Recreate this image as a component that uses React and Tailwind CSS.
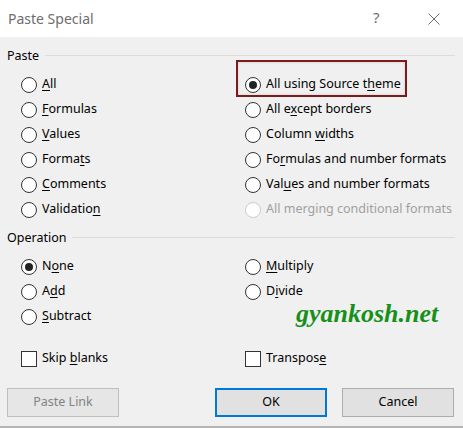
import React from "react";

const U = ({ children }) => <span className="underline underline-offset-2 decoration-1">{children}</span>;

function Radio({ checked, disabled, children }) {
  return (
    <div className="flex items-center h-[25px]">
      <span
        className={`w-[16px] h-[16px] rounded-full border flex items-center justify-center bg-white ${
          disabled ? "border-[#cccccc]" : "border-[#333333]"
        }`}
      >
        {checked && <span className="w-[8px] h-[8px] rounded-full bg-[#222]" />}
      </span>
      <span className={`ml-[5px] ${disabled ? "text-[#a0a0a0]" : "text-black"}`}>{children}</span>
    </div>
  );
}

function Check({ children }) {
  return (
    <div className="flex items-center h-[25px]">
      <span className="w-[16px] h-[16px] border border-[#333333] bg-white" />
      <span className="ml-[5px] text-black">{children}</span>
    </div>
  );
}

function GroupHeader({ label }) {
  return (
    <div className="flex items-center h-[16px] pl-[7px] pr-[8px]">
      <span className="text-black">{label}</span>
      <span className="flex-1 h-px bg-[#dcdcdc] ml-[6px] mt-[-1px]" />
    </div>
  );
}

function Btn({ children, primary, disabled }) {
  return (
    <div
      className={`w-[112px] h-[29px] flex items-center justify-center bg-[#e1e1e1] ${
        primary ? "border-2 border-[#0078d7]" : "border border-[#adadad]"
      } ${disabled ? "text-[#838383] border-[#bfbfbf] bg-[#e6e6e6]" : "text-black"}`}
    >
      {children}
    </div>
  );
}

export default function App() {
  return (
    <div
      className="w-[463px] h-[428px] bg-[#f0f0f0] relative overflow-hidden text-[12.5px] leading-none"
      style={{ fontFamily: '"Segoe UI", "Noto Sans", "Open Sans", sans-serif' }}
    >
      <div className="h-[37px] bg-white flex items-center pl-[8px] relative">
        <span className="text-[14px] text-[#6d6d6d]">Paste Special</span>
        <span className="absolute left-[373px] top-[10px] text-[15px] text-[#6d6d6d]">?</span>
        <svg className="absolute left-[428px] top-[13px]" width="12" height="12" viewBox="0 0 12 12">
          <path d="M0.5 0.5 L11.5 11.5 M11.5 0.5 L0.5 11.5" stroke="#6d6d6d" strokeWidth="1" fill="none" />
        </svg>
      </div>

      <div className="pt-[11px]">
        <GroupHeader label="Paste" />
        <div className="flex mt-[8px]">
          <div className="w-[245px] pl-[21px]">
            <Radio><U>A</U>ll</Radio>
            <Radio><U>F</U>ormulas</Radio>
            <Radio><U>V</U>alues</Radio>
            <Radio>Forma<U>t</U>s</Radio>
            <Radio><U>C</U>omments</Radio>
            <Radio>Validatio<U>n</U></Radio>
          </div>
          <div className="flex-1 relative">
            <div className="absolute left-[-9px] top-[-12px] w-[171px] h-[37px] border-2 border-[#7b1c1c] shadow-[inset_0_0_3px_rgba(0,0,0,0.15)] pointer-events-none" />
            <Radio checked>All using Source t<U>h</U>eme</Radio>
            <Radio>All e<U>x</U>cept borders</Radio>
            <Radio>Column <U>w</U>idths</Radio>
            <Radio>Fo<U>r</U>mulas and number formats</Radio>
            <Radio>Val<U>u</U>es and number formats</Radio>
            <Radio disabled>All merging conditional formats</Radio>
          </div>
        </div>

        <div className="mt-[8px]">
          <GroupHeader label="Operation" />
        </div>
        <div className="flex mt-[8px]">
          <div className="w-[245px] pl-[21px]">
            <Radio checked>N<U>o</U>ne</Radio>
            <Radio>A<U>d</U>d</Radio>
            <Radio><U>S</U>ubtract</Radio>
          </div>
          <div className="flex-1">
            <Radio><U>M</U>ultiply</Radio>
            <Radio>D<U>i</U>vide</Radio>
          </div>
        </div>

        <div className="flex mt-[17px]">
          <div className="w-[245px] pl-[21px]">
            <Check>Skip <U>b</U>lanks</Check>
          </div>
          <div className="flex-1">
            <Check>Transpos<U>e</U></Check>
          </div>
        </div>

        <div className="flex mt-[17px] pl-[7px] pr-[9px]">
          <Btn disabled>Paste Link</Btn>
          <div className="flex-1" />
          <Btn primary>OK</Btn>
          <div className="w-[15px]" />
          <Btn>Cancel</Btn>
        </div>
      </div>

      <div className="absolute left-0 right-0 bottom-0 h-[2px] bg-[#b5b5b5]" />

      <div
        className="absolute left-[296px] top-[301px] text-[26px] italic font-bold text-[#17901a] pointer-events-none"
        style={{ fontFamily: '"Liberation Serif", serif' }}
      >
        gyankosh.net
      </div>
    </div>
  );
}
